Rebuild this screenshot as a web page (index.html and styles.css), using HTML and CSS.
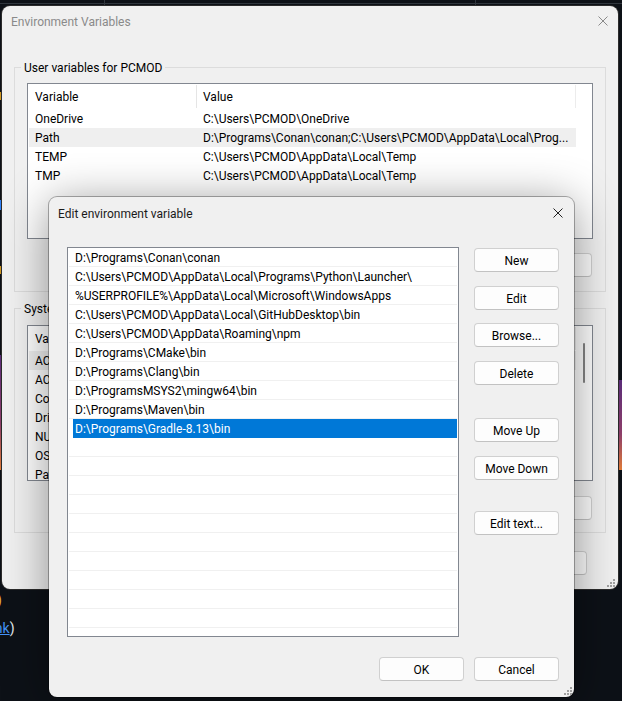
FILE: index.html
```html
<!DOCTYPE html>
<html lang="en">
<head>
  <meta charset="UTF-8" />
  <meta name="viewport" content="width=device-width, initial-scale=1.0"/>
  <title>Environment Variables</title>
  <link rel="stylesheet" href="styles.css">
</head>
<body>

<!-- bits of the desktop behind the dialogs -->
<div class="desk-line-h"></div>
<div class="desk-line-v" style="left:104px"></div>
<div class="desk-line-v" style="left:475px"></div>
<span class="sliver yellow" style="top:92px"></span>
<span class="sliver blue" style="top:200px"></span>
<span class="sliver yellow" style="top:266px"></span>
<span class="sliver grad left"></span>
<span class="sliver grad right"></span>
<span class="desk-text paren">)</span>
<span class="desk-text link-line"><a>link</a>)</span>

<div class="window outer">
  <div class="titlebar">
    <span class="title">Environment Variables</span>
    <svg class="close" width="10" height="10" viewBox="0 0 10 10"><path d="M0.5 0.5 L9.5 9.5 M9.5 0.5 L0.5 9.5" /></svg>
  </div>
  <div class="outer-body">
    <div class="group">
      <div class="group-label">User variables for PCMOD</div>
      <div class="varlist">
        <div class="vrow head"><span class="c1">Variable</span><span class="c2">Value</span></div>
        <div class="vrow"><span class="c1">OneDrive</span><span class="c2">C:\Users\PCMOD\OneDrive</span></div>
        <div class="vrow hl"><span class="c1">Path</span><span class="c2">D:\Programs\Conan\conan;C:\Users\PCMOD\AppData\Local\Prog...</span></div>
        <div class="vrow"><span class="c1">TEMP</span><span class="c2">C:\Users\PCMOD\AppData\Local\Temp</span></div>
        <div class="vrow"><span class="c1">TMP</span><span class="c2">C:\Users\PCMOD\AppData\Local\Temp</span></div>
      </div>
      <div class="btnrow">
        <button>New...</button><button>Edit...</button><button>Delete</button>
      </div>
    </div>

    <div class="group system">
      <div class="group-label">System variables</div>
      <div class="varlist">
        <div class="vrow head"><span class="c1">Variable</span><span class="c2"></span></div>
        <div class="vrow hl"><span class="c1">ACSetupSvcPort</span><span class="c2"></span></div>
        <div class="vrow"><span class="c1">ACSvcPort</span><span class="c2"></span></div>
        <div class="vrow"><span class="c1">ComSpec</span><span class="c2"></span></div>
        <div class="vrow"><span class="c1">DriverData</span><span class="c2"></span></div>
        <div class="vrow"><span class="c1">NUMBER_OF_PROCESSORS</span><span class="c2"></span></div>
        <div class="vrow"><span class="c1">OS</span><span class="c2"></span></div>
        <div class="vrow"><span class="c1">Path</span><span class="c2"></span></div>
        <div class="thumb"></div>
      </div>
      <div class="btnrow">
        <button>New...</button><button>Edit...</button><button>Delete</button>
      </div>
    </div>

    <div class="footer">
      <button>OK</button><button>Cancel</button>
    </div>
  </div>
  <svg class="grip" width="8" height="8" viewBox="0 0 8 8"><rect x="6" y="0" width="2" height="2"/><rect x="3" y="3" width="2" height="2"/><rect x="6" y="3" width="2" height="2"/><rect x="0" y="6" width="2" height="2"/><rect x="3" y="6" width="2" height="2"/><rect x="6" y="6" width="2" height="2"/></svg>
</div>

<div class="window inner">
  <div class="titlebar">
    <span class="title">Edit environment variable</span>
    <svg class="close" width="10" height="10" viewBox="0 0 10 10"><path d="M0.5 0.5 L9.5 9.5 M9.5 0.5 L0.5 9.5" /></svg>
  </div>
  <div class="inner-body">
    <div class="pathlist">
      <div class="item">D:\Programs\Conan\conan</div>
      <div class="item">C:\Users\PCMOD\AppData\Local\Programs\Python\Launcher\</div>
      <div class="item">%USERPROFILE%\AppData\Local\Microsoft\WindowsApps</div>
      <div class="item">C:\Users\PCMOD\AppData\Local\GitHubDesktop\bin</div>
      <div class="item">C:\Users\PCMOD\AppData\Roaming\npm</div>
      <div class="item">D:\Programs\CMake\bin</div>
      <div class="item">D:\Programs\Clang\bin</div>
      <div class="item">D:\ProgramsMSYS2\mingw64\bin</div>
      <div class="item">D:\Programs\Maven\bin</div>
      <div class="item selected">D:\Programs\Gradle-8.13\bin</div>
      <div class="item"></div><div class="item"></div><div class="item"></div>
      <div class="item"></div><div class="item"></div><div class="item"></div>
      <div class="item"></div><div class="item"></div><div class="item"></div>
      <div class="item"></div><div class="item"></div>
    </div>
    <div class="actions">
      <button>New</button>
      <button>Edit</button>
      <button>Browse...</button>
      <button>Delete</button>
      <button class="sep">Move Up</button>
      <button>Move Down</button>
      <button class="sep2">Edit text...</button>
    </div>
  </div>
  <div class="footer">
    <button>OK</button><button>Cancel</button>
  </div>
  <svg class="grip" width="8" height="8" viewBox="0 0 8 8"><rect x="6" y="0" width="2" height="2"/><rect x="3" y="3" width="2" height="2"/><rect x="6" y="3" width="2" height="2"/><rect x="0" y="6" width="2" height="2"/><rect x="3" y="6" width="2" height="2"/><rect x="6" y="6" width="2" height="2"/></svg>
</div>

</body>
</html>
```

FILE: styles.css
```css
* { box-sizing: border-box; }
body { margin: 0; width: 622px; height: 701px; overflow: hidden; position: relative; background: #0d1117; font-family: Roboto, "Liberation Sans", sans-serif; font-size: 12px; color: #000; }

/* desktop */
.desk-line-h { position: absolute; left: 0; right: 0; top: 3px; height: 1px; background: #30363d; }
.desk-line-v { position: absolute; top: 0; width: 1px; height: 6px; background: #30363d; }
.sliver { position: absolute; left: 0; width: 2px; height: 8px; }
.sliver.yellow { background: #d29922; }
.sliver.blue { background: #2f81f7; height: 10px; }
.sliver.grad { top: 355px; height: 115px; background: linear-gradient(#5b2d7a, #8e3f6a 60%, #e07b39); }
.sliver.grad.right { left: 619px; width: 3px; top: 380px; height: 90px; }
.desk-text { position: absolute; font-size: 14px; line-height: 18px; color: #e6edf3; }
.desk-text.paren { left: -3px; top: 591px; color: #e3b341; }
.desk-text.link-line { left: -12px; top: 619px; }
.desk-text a { color: #4493f8; text-decoration: underline; }

/* windows */
.window { position: absolute; background: #f0f0f0; border-radius: 8px; }
.outer { left: 2px; top: 6px; width: 616px; height: 583px; box-shadow: 0 0 0 1px #2b2b2b; }
.inner { left: 49px; top: 197px; width: 525px; height: 500px; box-shadow: 0 0 0 1px rgba(0,0,0,0.3), 0 6px 46px rgba(0,0,0,0.42); }
.titlebar { display: flex; align-items: center; justify-content: space-between; height: 30px; padding: 0 10px 0 9px; }
.title { padding-top: 2px; }
.outer .title { color: #8a8a8a; }
.outer .close { stroke: #8a8a8a; }
.inner .titlebar { height: 32px; padding: 0 11px 0 9px; }
.inner .title { color: #1a1a1a; }
.inner .close { stroke: #222; }
.close { fill: none; stroke-width: 1; }
.grip { position: absolute; fill: #a0a0a0; }
.outer .grip { right: 3px; bottom: 2px; }
.inner .grip { right: 2px; bottom: 2px; }

button { height: 24px; padding: 2px 0 0; background: #fdfdfd; border: 1px solid #d0d0d0; border-bottom-color: #c2c2c2; border-radius: 4px; font-family: inherit; font-size: 12px; color: #000; }

/* outer dialog */
.outer-body { padding: 31px 12px 0; }
.group { border: 1px solid #dcdcdc; padding: 0 12px 14px; }
.group.system { margin-top: 16px; padding-bottom: 12px; }
.group-label { width: fit-content; margin: -8px 0 0 -6px; padding: 1px 3px 0; line-height: 15px; background: #f0f0f0; }
.varlist { position: relative; height: 156px; margin-top: 7px; background: #fff; border: 1px solid #828790; overflow: hidden; }
.system .varlist { margin-top: 8px; }
.vrow { display: flex; height: 19px; line-height: 21px; margin-left: 1px; white-space: nowrap; }
.vrow.head { height: 25px; line-height: 25px; }
.vrow .c1 { width: 168px; padding-left: 6px; overflow: hidden; flex: none; }
.vrow .c2 { width: 379px; padding-left: 6px; overflow: hidden; flex: none; }
.vrow.head .c1 { border-right: 1px solid #e5e5e5; margin: 1px 0; line-height: 25px; }
.vrow.head .c2 { border-right: 1px solid #ececec; margin: 1px 0; line-height: 25px; }
.vrow.hl { background: #efefef; width: 547px; }
.thumb { position: absolute; left: 555px; top: 17px; width: 2px; height: 40px; background: #858585; border-radius: 1px; }
.btnrow { display: flex; justify-content: flex-end; gap: 8px; margin-top: 14px; padding-right: 1px; }
.system .btnrow { margin-top: 15px; }
.btnrow button { width: 75px; }
.outer .footer { display: flex; justify-content: flex-end; gap: 8px; margin-top: 18px; padding-right: 19px; }
.outer .footer button { width: 75px; }

/* edit dialog */
.inner-body { display: flex; gap: 15px; padding: 18px 15px 0 18px; }
.pathlist { width: 392px; height: 390px; background: #fff; border: 1px solid #828790; overflow: hidden; }
.item { height: 19px; line-height: 20px; margin: 0 1px; padding-left: 6px; border-bottom: 1px solid #f0f0f0; white-space: nowrap; }
.item.selected { margin-left: 5px; padding-left: 2px; background: #0078d7; border-bottom-color: #0078d7; color: #fff; }
.actions { display: flex; flex-direction: column; gap: 13.5px; width: 85px; padding-top: 1px; }
.actions button { width: 85px; }
.actions .sep { margin-top: 20px; }
.actions .sep2 { margin-top: 18px; }
.inner .footer { display: flex; justify-content: flex-end; gap: 10px; margin-top: 20px; padding-right: 15px; }
.inner .footer button { width: 85px; }
```
